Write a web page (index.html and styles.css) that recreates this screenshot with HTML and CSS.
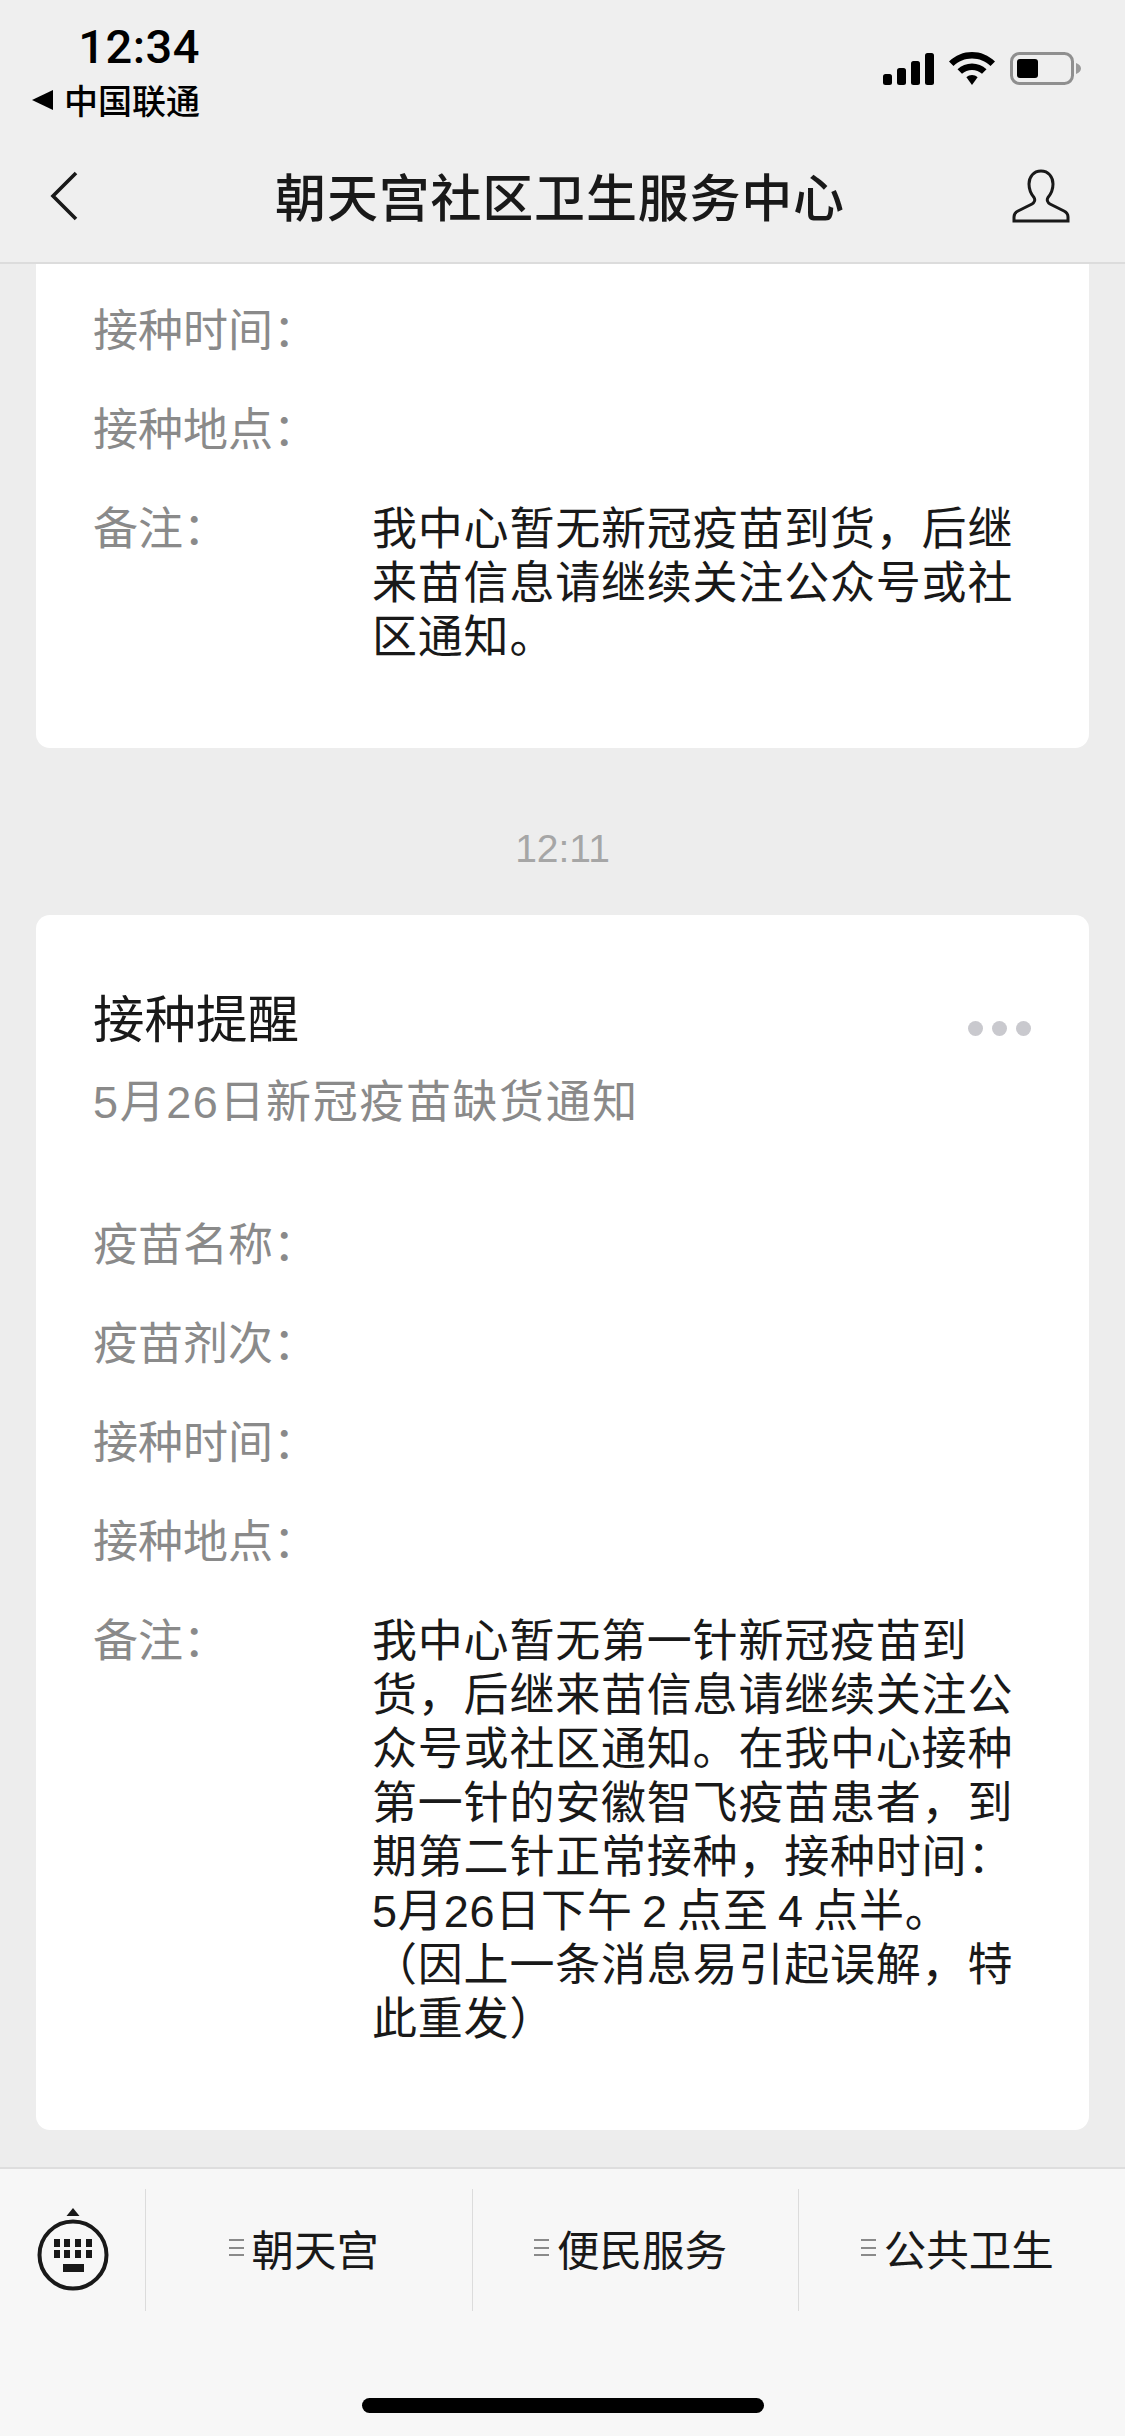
FILE: index.html
```html
<!DOCTYPE html>
<html lang="zh-CN">
<head>
<meta charset="utf-8">
<title>朝天宫社区卫生服务中心</title>
<link rel="stylesheet" href="styles.css">
</head>
<body>
<div class="phone">
  <header class="header">
    <div class="status">
      <div class="status-left">
        <div class="clock">12:34</div>
        <div class="carrier">
          <svg class="carrier-back" viewBox="0 0 21 20"><path d="M21 0V20L0 10Z"/></svg>
          <span>中国联通</span>
        </div>
      </div>
      <div class="status-right">
        <svg class="signal" viewBox="0 0 51 32"><rect x="0" y="21" width="9" height="11" rx="2.5"/><rect x="14" y="15" width="9" height="17" rx="2.5"/><rect x="28" y="8" width="9" height="24" rx="2.5"/><rect x="42" y="0" width="9" height="32" rx="2.5"/></svg>
        <svg class="wifi" viewBox="0 0 46 33"><path d="M23 0C31.500 0 39.500 3.300 46 9.500L41.500 14C36.500 9.200 30 6.500 23 6.500C16 6.500 9.500 9.200 4.500 14L0 9.500C6.500 3.300 14.500 0 23 0Z"/><path d="M23 11.500C28.500 11.500 33.500 13.600 37.500 17.300L33 21.800C30.300 19.400 26.800 18 23 18C19.200 18 15.700 19.400 13 21.800L8.500 17.300C12.500 13.600 17.500 11.500 23 11.500Z"/><path d="M23 23C25 23 27 23.800 28.600 25.300L23 33L17.400 25.300C19 23.800 21 23 23 23Z"/></svg>
        <svg class="battery" viewBox="0 0 71 33"><rect x="1.500" y="1.500" width="61" height="30" rx="8" fill="none" stroke="#8f8f8f" stroke-width="3"/><rect x="7" y="7" width="21" height="19" rx="3" fill="#000"/><path d="M66 11C69 12 71 14 71 16.500C71 19 69 21 66 22Z" fill="#9a9a9a"/></svg>
      </div>
    </div>
    <nav class="nav">
      <svg class="back" viewBox="0 0 28 50"><path d="M26 2L3 25L26 48" fill="none" stroke="#191919" stroke-width="3.600"/></svg>
      <h1 class="title">朝天宫社区卫生服务中心</h1>
      <svg class="person" viewBox="0 0 58 54"><path d="M29 2C21.500 2 17 8 17 15C17 21 19.500 25.500 22 28.500C23.500 31 22.500 33.500 20 35L6 42C3 43.500 2 45.500 2 48V52H56V48C56 45.500 55 43.500 52 42L38 35C35.500 33.500 34.500 31 36 28.500C38.500 25.500 41 21 41 15C41 8 36.500 2 29 2Z" fill="none" stroke="#191919" stroke-width="3"/></svg>
    </nav>
  </header>

  <main class="feed">
    <section class="card card-clipped">
      <dl class="fields">
        <div class="field"><dt>接种时间：</dt><dd></dd></div>
        <div class="field"><dt>接种地点：</dt><dd></dd></div>
        <div class="field"><dt>备注：</dt><dd>我中心暂无新冠疫苗到货，后继来苗信息请继续关注公众号或社区通知。</dd></div>
      </dl>
    </section>

    <time class="stamp">12:11</time>

    <section class="card card-full">
      <div class="card-head">
        <div>
          <h2 class="card-title">接种提醒</h2>
          <p class="card-sub">5月26日新冠疫苗缺货通知</p>
        </div>
        <div class="more"><i></i><i></i><i></i></div>
      </div>
      <dl class="fields">
        <div class="field"><dt>疫苗名称：</dt><dd></dd></div>
        <div class="field"><dt>疫苗剂次：</dt><dd></dd></div>
        <div class="field"><dt>接种时间：</dt><dd></dd></div>
        <div class="field"><dt>接种地点：</dt><dd></dd></div>
        <div class="field"><dt>备注：</dt><dd>我中心暂无第一针新冠疫苗到货，后继来苗信息请继续关注公众号或社区通知。在我中心接种第一针的安徽智飞疫苗患者，到期第二针正常接种，接种时间：5月26日下午 2 点至 4 点半。（因上一条消息易引起误解，特此重发）</dd></div>
      </dl>
    </section>
  </main>

  <footer class="footer">
    <div class="menu">
      <div class="kb">
        <svg viewBox="0 0 72 84"><path d="M36 0L42.500 8H29.500Z" fill="#191919"/><circle cx="36" cy="47" r="33.500" fill="none" stroke="#191919" stroke-width="4"/><g fill="#191919"><rect x="17" y="31" width="6" height="8"/><rect x="27" y="31" width="6" height="8"/><rect x="38" y="31" width="6" height="8"/><rect x="49" y="31" width="6" height="8"/><rect x="17" y="42" width="6" height="8"/><rect x="27" y="42" width="6" height="8"/><rect x="38" y="42" width="6" height="8"/><rect x="49" y="42" width="6" height="8"/><rect x="26" y="56" width="21" height="8"/></g></svg>
      </div>
      <div class="menu-item"><span class="bars"></span><span>朝天宫</span></div>
      <div class="menu-item"><span class="bars"></span><span>便民服务</span></div>
      <div class="menu-item"><span class="bars"></span><span>公共卫生</span></div>
    </div>
    <div class="home"></div>
  </footer>
</div>
</body>
</html>
```
FILE: styles.css
```css
* { box-sizing: border-box; }
html, body { margin: 0; padding: 0; }
body {
  width: 1125px;
  height: 2436px;
  overflow: hidden;
  font-family: "Liberation Sans", "Noto Sans CJK SC", sans-serif;
  color: #191919;
}
.phone { width: 1125px; height: 2436px; display: flex; flex-direction: column; background: #ededed; }

.header { height: 264px; flex: none; background: #efefef; border-bottom: 2px solid #dcdcdc; display: flex; flex-direction: column; }
.status { height: 133px; display: flex; justify-content: space-between; padding: 22px 44px 0 30px; }
.status-left { display: flex; flex-direction: column; align-items: flex-end; width: 170px; }
.clock { font-family: "Roboto", sans-serif; font-weight: 500; font-size: 47px; line-height: 50px; color: #000; letter-spacing: 0.5px; }
.carrier { display: flex; align-items: center; gap: 11px; white-space: nowrap; font-family: "Noto Sans CJK SC", sans-serif; font-size: 34px; line-height: 40px; font-weight: 500; color: #000; margin-top: 8px; }
.carrier-back { flex: none; width: 21px; height: 20px; fill: #000; }
.status-right { display: flex; align-items: flex-start; padding-top: 30px; gap: 15px; }
.signal { width: 51px; height: 32px; margin-top: 1px; fill: #000; }
.wifi { width: 46px; height: 33px; fill: #000; }
.battery { width: 71px; height: 33px; }

.nav { flex: 1; display: grid; grid-template-columns: 1fr auto 1fr; align-items: center; padding: 0 55px 0 50px; }
.back { width: 28px; height: 50px; margin-top: -4px; }
.title { margin: 0; font-family: "Noto Sans CJK SC", sans-serif; font-size: 51px; line-height: 70px; font-weight: 500; letter-spacing: 0.800px; color: #191919; margin-top: -6px; }
.person { width: 58px; height: 54px; margin-top: -4px; justify-self: end; }

.feed { flex: 1; min-height: 0; display: flex; flex-direction: column; justify-content: flex-end; padding: 0 36px 37px; overflow: hidden; }
.card { flex: none; background: #fff; border-radius: 14px; padding: 0 70px 83px 57px; }
.card-clipped { padding-top: 70px; }
.card-full { padding-top: 66px; }
.stamp { display: block; flex: none; text-align: center; height: 167px; line-height: 40px; padding-top: 81px; font-size: 39px; color: #a6a6a6; font-family: "Liberation Sans", sans-serif; }

.card-head { display: flex; justify-content: space-between; align-items: flex-start; margin-right: -12px; }
.card-title { margin: 0; font-family: "Noto Sans CJK SC", sans-serif; font-size: 51.500px; line-height: 70px; font-weight: 400; color: #191919; }
.card-sub { margin: 22px 0 0; font-size: 45px; line-height: 60px; color: #8a8a8a; letter-spacing: 1.600px; }
.more { display: flex; gap: 9px; margin-top: 40px; }
.more i { width: 15px; height: 15px; border-radius: 50%; background: #c9c9ce; }

.fields { margin: 0; }
.card-full .fields { margin-top: 66px; }
.field { display: flex; min-height: 99px; align-items: flex-start; padding-top: 20px; }
.field dt { flex: none; width: 279px; font-size: 45px; line-height: 54px; color: #8a8a8a; }
.field dd { margin: 0; flex: 1; font-size: 45px; line-height: 54px; color: #191919; letter-spacing: 0.800px; word-spacing: -4px; }

.footer { flex: none; height: 269px; background: #f7f7f7; border-top: 2px solid #dedede; display: flex; flex-direction: column; }
.menu { display: flex; height: 122px; margin-top: 20px; }
.kb { flex: none; width: 145px; display: flex; align-items: center; justify-content: center; }
.kb svg { width: 72px; height: 84px; }
.menu-item { flex: 1; display: flex; align-items: center; justify-content: center; gap: 8px; padding: 0 10px 5px 0; border-left: 1px solid #dcdcdc; font-family: "Noto Sans CJK SC", sans-serif; font-size: 42.500px; color: #191919; }
.bars { width: 15px; height: 17px; background: repeating-linear-gradient(#8a8a8a 0 2px, transparent 2px 7.500px); }
.home { width: 402px; height: 15px; border-radius: 8px; background: #000; margin: 87px auto 0; }
```
